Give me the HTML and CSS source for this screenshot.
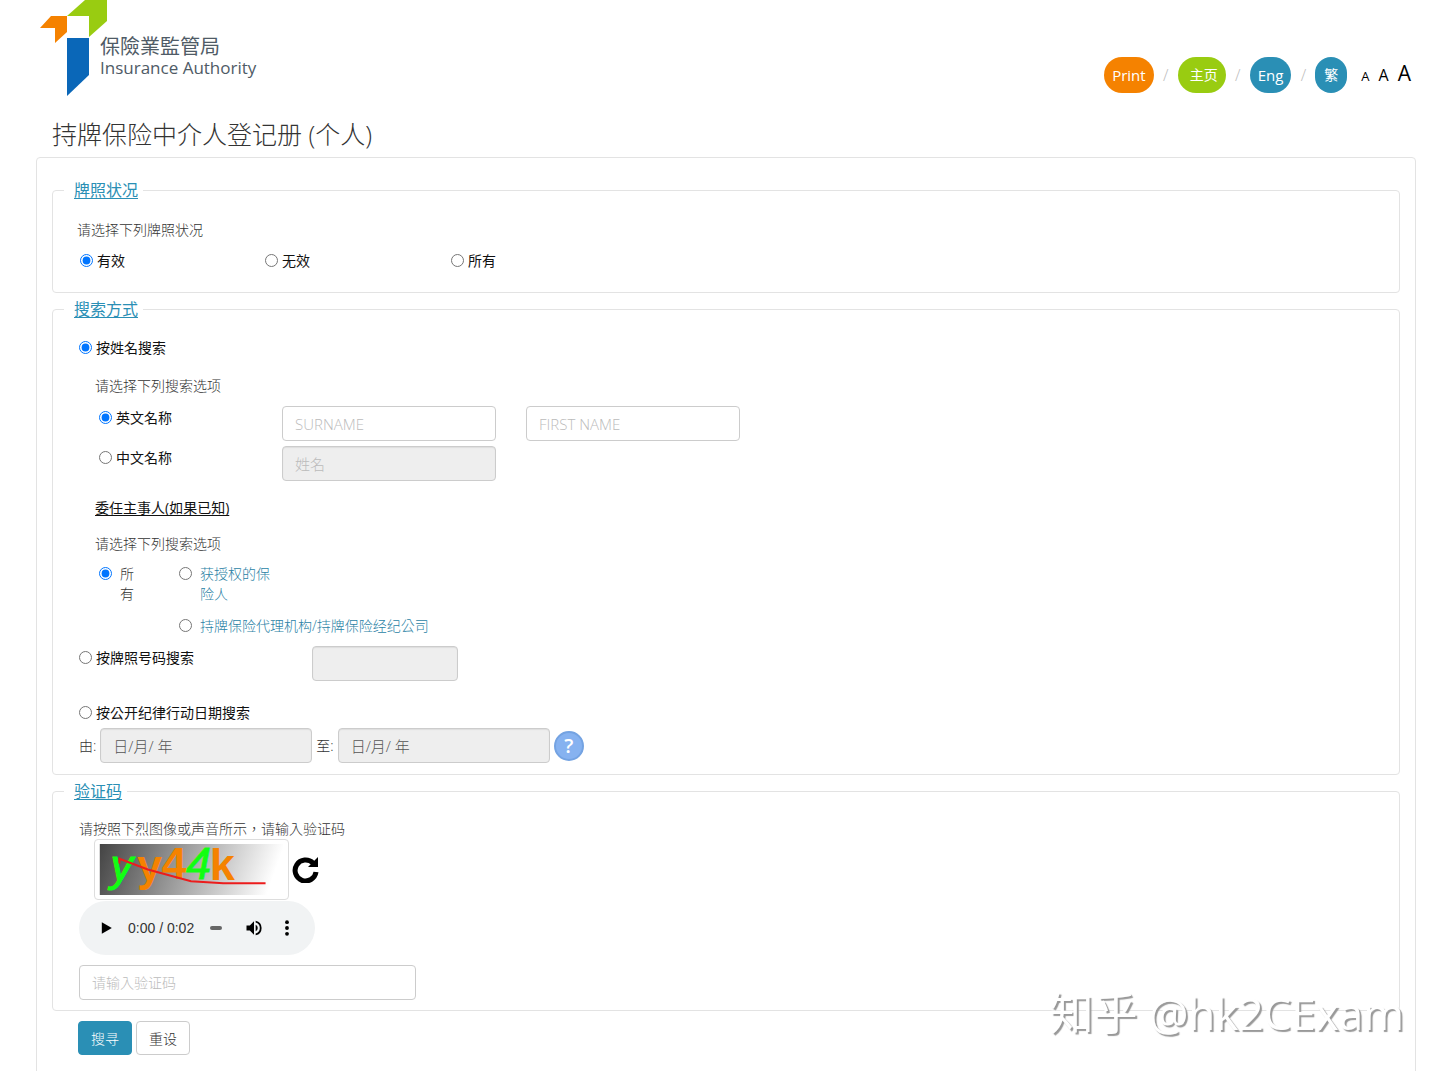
FILE: index.html
```
<!DOCTYPE html>
<html lang="zh-Hant">
<head>
    <meta charset="UTF-8">
    <meta name="viewport" content="width=device-width, initial-scale=1.0">
    <title>持牌保险中介人登记册 (个人)</title>
    <link rel="stylesheet" href="styles.css">
</head>
<body>

    <!-- Header -->
    <header class="header">
        <a class="logo" href="#">
            <svg class="logo-mark" viewBox="0 0 68 97" aria-hidden="true">
                <path fill="#9c1" d="M28 16 46 0h22v21L50 37V16z"/>
                <path fill="#f58200" d="M12 16h16v16L16 43V28H1z"/>
                <path fill="#0a67b8" d="M28 38h22v37L28 96z"/>
            </svg>
            <span class="logo-text">
                <span class="logo-zh">保險業監管局</span>
                <span class="logo-en">Insurance Authority</span>
            </span>
        </a>
        <nav class="nav">
            <button type="button" class="pill orange">Print</button>
            <span class="slash">/</span>
            <a class="pill green" href="#">主页</a>
            <span class="slash">/</span>
            <a class="pill blue" href="#">Eng</a>
            <span class="slash">/</span>
            <a class="pill blue small" href="#">繁</a>
            <span class="sizes">
                <button type="button" class="size size-s">A</button>
                <button type="button" class="size size-m">A</button>
                <button type="button" class="size size-l">A</button>
            </span>
        </nav>
    </header>

    <h1>持牌保险中介人登记册 (个人)</h1>

    <form class="panel">
        <!-- Licence status -->
        <fieldset class="status">
            <legend><a href="#">牌照状况</a></legend>
            <p class="hint">请选择下列牌照状况</p>
            <div class="status-row">
                <label class="choice"><input type="radio" name="status" checked>有效</label>
                <label class="choice"><input type="radio" name="status">无效</label>
                <label class="choice"><input type="radio" name="status">所有</label>
            </div>
        </fieldset>

        <!-- Search method -->
        <fieldset class="search">
            <legend><a href="#">搜索方式</a></legend>
            <label class="choice"><input type="radio" name="method" checked>按姓名搜索</label>

            <div class="by-name">
                <p class="hint">请选择下列搜索选项</p>
                <div class="names">
                    <label class="choice"><input type="radio" name="lang" checked>英文名称</label>
                    <input class="field" type="text" placeholder="SURNAME" aria-label="SURNAME">
                    <input class="field" type="text" placeholder="FIRST NAME" aria-label="FIRST NAME">
                    <label class="choice"><input type="radio" name="lang">中文名称</label>
                    <input class="field" type="text" placeholder="姓名" aria-label="姓名" disabled>
                </div>
                <h2>委任主事人(如果已知)</h2>
                <p class="hint">请选择下列搜索选项</p>
                <div class="principals">
                    <label class="choice light all"><input type="radio" name="principal" checked><span>所有</span></label>
                    <label class="choice light insurer"><input type="radio" name="principal"><span>获授权的保险人</span></label>
                    <label class="choice light agency"><input type="radio" name="principal"><span>持牌保险代理机构/持牌保险经纪公司</span></label>
                </div>
            </div>

            <div class="by-number">
                <label class="choice"><input type="radio" name="method">按牌照号码搜索</label>
                <input class="field" type="text" aria-label="牌照号码" disabled>
            </div>

            <label class="choice"><input type="radio" name="method">按公开纪律行动日期搜索</label>
            <div class="dates">
                <label for="from">由:</label>
                <input class="field" id="from" type="text" value="日/月/ 年" disabled>
                <label for="to">至:</label>
                <input class="field" id="to" type="text" value="日/月/ 年" disabled>
                <button type="button" class="help" aria-label="说明">?</button>
            </div>
        </fieldset>

        <!-- Captcha -->
        <fieldset class="verify">
            <legend><a href="#">验证码</a></legend>
            <label class="hint" for="code">请按照下烈图像或声音所示，请输入验证码</label>
            <div class="captcha">
                <div class="captcha-frame">
                    <svg viewBox="0 0 187 52" role="img" aria-label="yy44k">
                        <defs>
                            <linearGradient id="grey" x1="0" y1="0" x2="1" y2="0.1">
                                <stop offset="0" stop-color="#444"/>
                                <stop offset="1" stop-color="#fff"/>
                            </linearGradient>
                        </defs>
                        <rect width="187" height="52" fill="url(#grey)"/>
                        <g class="captcha-text">
                            <text class="lime" x="11" y="38">y</text>
                            <text class="amber" x="38" y="38">y</text>
                            <text class="amber" x="63" y="36">4</text>
                            <text class="lime" x="88" y="36">4</text>
                            <text class="amber" x="112" y="37">k</text>
                        </g>
                        <path d="M20 20v-5l29 11 44 12 33 2h43" fill="none" stroke="#ec1c1c" stroke-width="2"/>
                    </svg>
                </div>
                <button type="button" class="refresh" aria-label="刷新">
                    <svg viewBox="0 0 27 27" aria-hidden="true">
                        <path d="M21 7A10.500 10.500 0 1 0 24 16" fill="none" stroke="#000" stroke-width="5"/>
                        <path d="M26 1v10H16z"/>
                    </svg>
                </button>
            </div>
            <div class="player">
                <button type="button" class="icon-btn" aria-label="播放">
                    <svg viewBox="0 0 24 24" aria-hidden="true"><path d="M7 5v14l12-7z"/></svg>
                </button>
                <span class="time">0:00 / 0:02</span>
                <span class="track"></span>
                <button type="button" class="icon-btn" aria-label="音量">
                    <svg viewBox="0 0 24 24" aria-hidden="true"><path d="M3 9v6h4l5 5V4L7 9H3zm13.500 3A4.500 4.500 0 0 0 14 8v8a4.500 4.500 0 0 0 2.500-4zM14 3.200v2.100a7 7 0 0 1 0 13.400v2.100a9 9 0 0 0 0-17.600z"/></svg>
                </button>
                <button type="button" class="icon-btn" aria-label="更多">
                    <svg viewBox="0 0 24 24" aria-hidden="true"><circle cx="12" cy="5" r="2.300"/><circle cx="12" cy="12" r="2.300"/><circle cx="12" cy="19" r="2.300"/></svg>
                </button>
            </div>
            <input class="field code" id="code" type="text" placeholder="请输入验证码">
        </fieldset>

        <div class="actions">
            <button type="submit" class="btn primary">搜寻</button>
            <button type="reset" class="btn">重设</button>
        </div>
    </form>

    <div class="watermark">知乎 @hk2CExam</div>

</body>
</html>
```
FILE: styles.css
```
* {
    box-sizing: border-box;
}

body {
    margin: 0;
    font-family: "Open Sans", "Noto Sans CJK TC", sans-serif;
    font-size: 14px;
    font-weight: 300;
    line-height: 20px;
    color: #333;
    background-color: #fff;
}

button, input {
    font-family: inherit;
    font-weight: inherit;
    margin: 0;
}

button {
    cursor: pointer;
}

p {
    margin: 0;
}

/* Header */
.header {
    display: flex;
    justify-content: space-between;
    align-items: flex-start;
    height: 119px;
    padding: 0 29px 0 39px;
}

.logo {
    display: flex;
    color: #4f5b66;
    text-decoration: none;
    font-weight: 400;
}

.logo-mark {
    width: 68px;
    height: 97px;
}

.logo-text {
    display: flex;
    flex-direction: column;
    margin: 36px 0 0 -7px;
}

.logo-zh {
    font-size: 20px;
    line-height: 22px;
}

.logo-en {
    font-family: "Open Sans", sans-serif;
    font-size: 17px;
    line-height: 20px;
}

.nav {
    display: flex;
    align-items: center;
    padding-top: 57px;
}

.pill {
    height: 36px;
    padding: 0 8px;
    border: 0;
    border-radius: 18px;
    color: #fff;
    font-size: 15px;
    font-weight: 400;
    line-height: 36px;
    text-decoration: none;
}

.green {
    padding: 0 8px 0 12px;
    background-color: #9c1;
    font-size: 14px;
}

.orange {
    background-color: #f58200;
}

.blue {
    background-color: #2a8fb5;
}

.small {
    padding: 0 9px;
    font-size: 14px;
}

.slash {
    width: 24px;
    color: #bbb;
    font-size: 16px;
    text-align: center;
}

.sizes {
    display: flex;
    align-items: baseline;
    gap: 9px;
    margin-left: 14px;
    padding-bottom: 4px;
}

.size {
    padding: 0;
    border: 0;
    background: none;
    color: #000;
    font-weight: 400;
}

.size-s {
    font-size: 13px;
}

.size-m {
    font-size: 16px;
}

.size-l {
    font-size: 21px;
}

h1 {
    margin: 0 52px 8px;
    font-size: 25px;
    font-weight: 300;
    line-height: 30px;
}

/* Form panel */
.panel {
    margin: 0 24px 0 36px;
    padding: 20px 15px 40px;
    border: 1px solid #e3e3e3;
    border-radius: 4px;
}

fieldset {
    min-width: 0;
    margin: 0 0 4px;
    padding: 0 11px;
    border: 1px solid #e3e3e3;
    border-radius: 4px;
}

legend {
    padding: 0 5px 0 10px;
    font-size: 16px;
    font-weight: 400;
    line-height: 24px;
}

legend a {
    color: #2a8fb5;
    text-underline-offset: 2px;
}

.choice {
    display: flex;
    align-items: flex-start;
    gap: 4px;
    font-weight: 400;
    color: #111;
}

.choice input {
    flex: none;
    width: 13px;
    height: 13px;
    margin-top: 3px;
}

.hint {
    display: block;
}

.field {
    width: 214px;
    height: 35px;
    padding: 0 12px;
    border: 1px solid #ccc;
    border-radius: 4px;
    background-color: #fff;
    color: #555;
    font-size: 15px;
}

.field::placeholder {
    color: #bbb;
}

.field:disabled {
    background-color: #eee;
    box-shadow: inset 0 1px 1px #ddd;
}

/* Licence status */
.status {
    padding: 18px 13px 21px;
}

.status legend {
    margin-left: -2px;
}

.status .hint {
    padding-left: 11px;
}

.status-row {
    display: grid;
    grid-template-columns: 185px 186px 185px;
    margin-top: 11px;
    padding-left: 14px;
}

/* Search method */
.search {
    padding-top: 17px;
    padding-bottom: 11px;
}

.search > .choice,
.by-number,
.dates {
    margin-left: 15px;
}

.by-name {
    padding: 18px 0 0 31px;
}

.names {
    display: grid;
    grid-template-columns: 183px 214px 244px;
    row-gap: 5px;
    margin: 10px 0 17px;
    padding-left: 4px;
}

.names .field:nth-child(3) {
    margin-left: 30px;
}

.names .choice {
    grid-column: 1;
    padding-top: 2px;
}

h2 {
    margin: 0 0 16px;
    color: #111;
    font-size: 14px;
    font-weight: 400;
    line-height: 20px;
    text-decoration: underline;
    text-underline-offset: 2px;
}

.principals {
    display: grid;
    grid-template-columns: 80px 1fr;
    row-gap: 12px;
    margin-top: 10px;
    padding-left: 4px;
}

.light {
    gap: 8px;
    color: #333;
    font-weight: 300;
}

.all span {
    width: 14px;
}

.insurer span {
    width: 76px;
}

.insurer,
.agency {
    color: #2a7fa5;
}

.agency {
    grid-column: 2;
}

.by-number {
    display: grid;
    grid-template-columns: 233px 146px;
    margin-top: 10px;
    margin-bottom: 22px;
}

.by-number .choice {
    padding-top: 2px;
}

.by-number .field {
    width: 100%;
}

.dates {
    display: flex;
    align-items: center;
    gap: 4px;
    margin-top: 5px;
}

.dates .field {
    width: 212px;
}

.help {
    width: 30px;
    height: 30px;
    padding: 0;
    border: 2px solid #74a3e2;
    border-radius: 50%;
    background-color: #86b2f0;
    color: #fff;
    font-size: 20px;
    font-weight: 600;
    line-height: 26px;
}

/* Captcha */
.verify {
    padding-top: 16px;
    padding-bottom: 10px;
}

.verify > :not(legend) {
    margin-left: 15px;
}

.captcha {
    display: flex;
    align-items: center;
    gap: 3px;
    padding-left: 15px;
}

.captcha-frame {
    width: 195px;
    height: 61px;
    padding: 4px 3px;
    border: 1px solid #ddd;
    border-radius: 4px;
}

.captcha-frame svg {
    display: block;
    width: 100%;
    height: 100%;
    overflow: visible;
}

.captcha-text {
    font-family: "Liberation Sans", Arial, sans-serif;
    font-size: 46px;
    font-weight: 700;
}

.lime {
    fill: #1f1;
    font-style: italic;
    font-weight: 400;
    stroke: #1f1;
}

.amber {
    fill: #f58200;
}

.refresh {
    display: flex;
    padding: 0;
    border: 0;
    background: none;
}

.refresh svg {
    width: 27px;
    height: 27px;
}

.player {
    display: flex;
    align-items: center;
    width: 236px;
    height: 54px;
    margin-top: 1px;
    padding: 0 13px;
    border-radius: 27px;
    background-color: #f1f3f4;
}

.icon-btn {
    display: flex;
    flex: none;
    padding: 4px;
    border: 0;
    background: none;
}

.icon-btn svg {
    width: 20px;
    height: 20px;
}

.time {
    margin: 0 16px 0 8px;
    font-family: "Liberation Sans", Arial, sans-serif;
    font-size: 14px;
    font-weight: 400;
    white-space: nowrap;
}

.track {
    flex: none;
    width: 12px;
    height: 4px;
    margin-right: 18px;
    border-radius: 2px;
    background-color: #666;
}

.player .icon-btn:last-child {
    margin-left: 5px;
}

.code {
    display: block;
    width: 337px;
    margin-top: 10px;
    font-size: 14px;
}

.actions {
    display: flex;
    gap: 4px;
    margin-top: 10px;
    padding-left: 26px;
}

.btn {
    height: 34px;
    padding: 0 12px;
    border: 1px solid #ccc;
    border-radius: 4px;
    background-color: #fff;
    color: #333;
    font-size: 14px;
}

.primary {
    border-color: #2a8fb5;
    background-color: #2a8fb5;
    color: #fff;
}

.watermark {
    position: fixed;
    right: 36px;
    bottom: 28px;
    color: #fff;
    font-size: 44px;
    font-weight: 400;
    line-height: 60px;
    text-shadow: 2px 2px 1px #999;
    pointer-events: none;
}
```
